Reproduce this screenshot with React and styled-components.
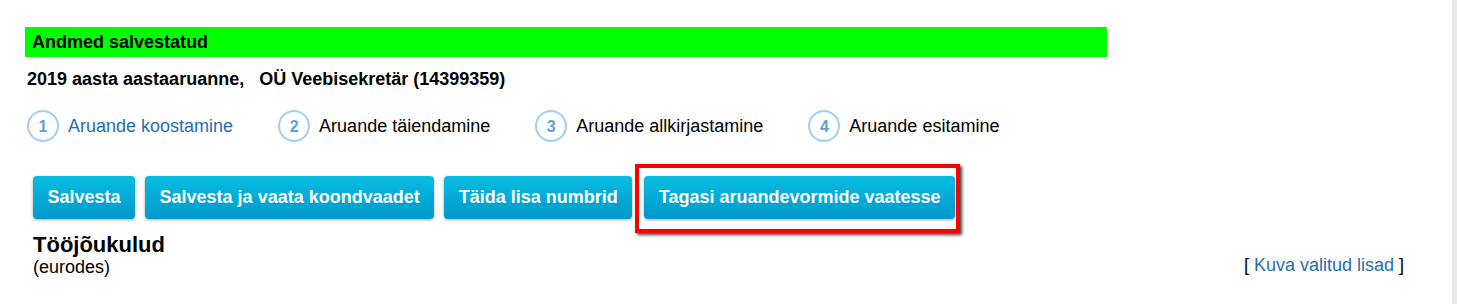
import React from "react";
import styled, { createGlobalStyle } from "styled-components";

const GlobalStyle = createGlobalStyle`
  html, body { margin: 0; padding: 0; background: #fff; }
  body { font-family: "Liberation Sans", Arial, sans-serif; color: #000; }
`;

const Page = styled.div`
  display: flex;
  min-height: 304px;
`;

const Content = styled.main`
  flex: 1;
  padding: 27px 48px 0 25px;
`;

const ScrollTrack = styled.div`
  width: 5px;
  background: #eaeaea;
`;

const Notice = styled.div`
  width: 1082px;
  height: 30px;
  box-sizing: border-box;
  padding-left: 7px;
  background: #00ff00;
  font-weight: bold;
  font-size: 18px;
  line-height: 30px;
`;

const ReportTitle = styled.h1`
  margin: 12px 0 0;
  padding-left: 2px;
  font-size: 18px;
  line-height: 21px;
  font-weight: bold;
  white-space: pre;
`;

const Steps = styled.ol`
  list-style: none;
  margin: 20px 0 0;
  padding: 0 0 0 2px;
  display: flex;
  align-items: center;
  gap: 45px;
`;

const Step = styled.li`
  display: flex;
  align-items: center;
  gap: 9px;
  font-size: 18px;
  line-height: 21px;
  color: ${(p) => (p.$active ? "#246fb2" : "#000")};
`;

const StepNumber = styled.span`
  width: 32px;
  height: 32px;
  box-sizing: border-box;
  border-radius: 50%;
  border: 2px solid #a3d0f1;
  box-shadow: inset 0 0 1px #cfe6f8;
  display: flex;
  align-items: center;
  justify-content: center;
  font-size: 16px;
  font-weight: bold;
  color: #629fd8;
`;

const Section = styled.section`
  padding-left: 8px;
`;

const Toolbar = styled.div`
  margin-top: 34px;
  display: flex;
  gap: 10px;
`;

const Button = styled.button`
  position: relative;
  margin-left: ${(p) => (p.$highlighted ? "2px" : "0")};
  height: 43px;
  padding: 0 14.5px;
  border: none;
  border-radius: 4px;
  background: linear-gradient(#07bde0, #0098ca);
  box-shadow: 0 1px 3px rgba(0, 0, 0, 0.35);
  color: #fff;
  font-family: "Liberation Sans", Arial, sans-serif;
  font-size: 18px;
  font-weight: bold;
  line-height: 21px;
  cursor: pointer;

  ${(p) =>
    p.$highlighted &&
    `
    &::after {
      content: "";
      position: absolute;
      top: -12px;
      right: -5px;
      bottom: -14px;
      left: -9px;
      border: 4px solid #ff0000;
      box-shadow: 2px 2px 3px rgba(0, 0, 0, 0.75);
      pointer-events: none;
    }
  `}
`;

const SectionHeader = styled.div`
  margin-top: 13px;
  display: flex;
  justify-content: space-between;
  align-items: flex-end;
`;

const SectionTitle = styled.h2`
  margin: 0;
  font-size: 22px;
  line-height: 25px;
  font-weight: bold;
`;

const Unit = styled.div`
  font-size: 18px;
  line-height: 21px;
`;

const Bracketed = styled.div`
  font-size: 18px;
  line-height: 21px;
  margin-bottom: 2px;
`;

const Link = styled.a`
  color: #246fb2;
  text-decoration: none;
`;

const steps = [
  "Aruande koostamine",
  "Aruande täiendamine",
  "Aruande allkirjastamine",
  "Aruande esitamine",
];

const buttons = [
  "Salvesta",
  "Salvesta ja vaata koondvaadet",
  "Täida lisa numbrid",
  "Tagasi aruandevormide vaatesse",
];

export default function App() {
  return (
    <>
      <GlobalStyle />
      <Page>
        <Content>
          <Notice>Andmed salvestatud</Notice>
          <ReportTitle>2019 aasta aastaaruanne,   OÜ Veebisekretär (14399359)</ReportTitle>
          <Steps>
            {steps.map((s, i) => (
              <Step key={s} $active={i === 0}>
                <StepNumber>{i + 1}</StepNumber>
                {s}
              </Step>
            ))}
          </Steps>
          <Section>
            <Toolbar>
              {buttons.map((b, i) => (
                <Button key={b} $highlighted={i === 3}>
                  {b}
                </Button>
              ))}
            </Toolbar>
            <SectionHeader>
              <div>
                <SectionTitle>Tööjõukulud</SectionTitle>
                <Unit>(eurodes)</Unit>
              </div>
              <Bracketed>
                [ <Link href="#">Kuva valitud lisad</Link> ]
              </Bracketed>
            </SectionHeader>
          </Section>
        </Content>
        <ScrollTrack />
      </Page>
    </>
  );
}
